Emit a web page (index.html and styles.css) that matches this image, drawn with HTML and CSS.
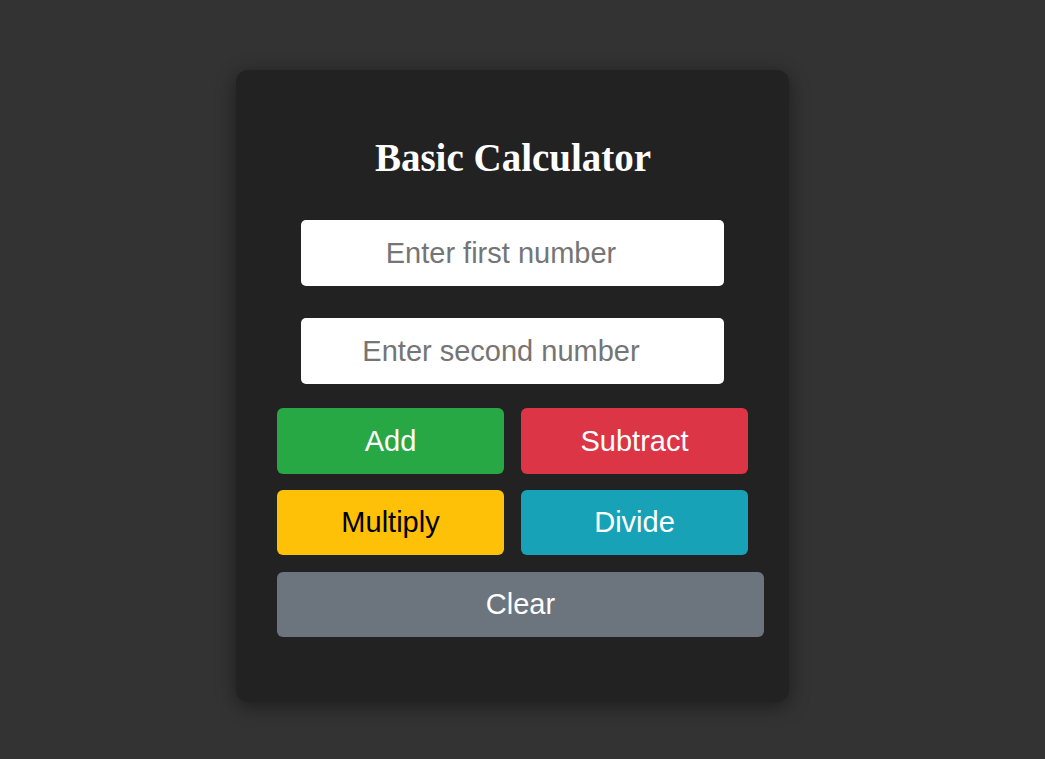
FILE: index.html
```html
<!DOCTYPE html>
<html lang="en">
<head>
<meta charset="utf-8">
<title>Basic Calculator</title>
<link rel="stylesheet" href="styles.css">
</head>
<body>
<main class="card">
  <h1 class="title">Basic Calculator</h1>
  <input class="field" type="text" placeholder="Enter first number">
  <input class="field" type="text" placeholder="Enter second number">
  <div class="buttons">
    <div class="ops">
      <button class="btn btn-add">Add</button>
      <button class="btn btn-sub">Subtract</button>
      <button class="btn btn-mul">Multiply</button>
      <button class="btn btn-div">Divide</button>
    </div>
    <button class="btn btn-clear">Clear</button>
  </div>
</main>
</body>
</html>
```
FILE: styles.css
```css
html, body {
  margin: 0;
  padding: 0;
}
body {
  background: #333333;
  min-height: 759px;
  font-family: "Liberation Sans", Arial, sans-serif;
  overflow: hidden;
}
.card {
  margin: 70px 0 0 236px;
  width: 553px;
  height: 632px;
  box-sizing: border-box;
  background: #222222;
  border-radius: 12px;
  box-shadow: 0 4px 20px rgba(0, 0, 0, 0.45);
  padding-top: 66px;
  display: flex;
  flex-direction: column;
  align-items: center;
}
.title {
  font-family: "Liberation Serif", "Times New Roman", serif;
  font-weight: bold;
  font-size: 39px;
  line-height: 44px;
  height: 44px;
  color: #ffffff;
  margin: 0 0 40px 1px;
  text-align: center;
}
.field {
  width: 423px;
  height: 66px;
  box-sizing: border-box;
  border: none;
  border-radius: 5px;
  background: #ffffff;
  font-family: "Liberation Sans", Arial, sans-serif;
  font-size: 29px;
  color: #222;
  text-align: center;
  padding: 0 23px 0 0;
  margin: 0 0 32px 0;
  outline: none;
}
.field::placeholder {
  color: #757575;
}
.field + .field {
  margin-bottom: 24px;
}
.buttons {
  align-self: flex-start;
  margin-left: 41px;
  width: 487px;
  display: flex;
  flex-direction: column;
  gap: 17px;
}
.ops {
  display: grid;
  grid-template-columns: 227px 227px;
  column-gap: 17px;
  row-gap: 16px;
}
.btn {
  height: 65px;
  border: none;
  border-radius: 6px;
  font-family: "Liberation Sans", Arial, sans-serif;
  font-size: 29px;
  line-height: 1;
  color: #ffffff;
  padding: 0;
  cursor: pointer;
}
.btn-add { background: #28a745; height: 66px; }
.btn-sub { background: #dc3545; height: 66px; }
.btn-mul { background: #ffc107; color: #000000; }
.btn-div { background: #17a2b8; }
.btn-clear { background: #6c757d; width: 487px; }
```
